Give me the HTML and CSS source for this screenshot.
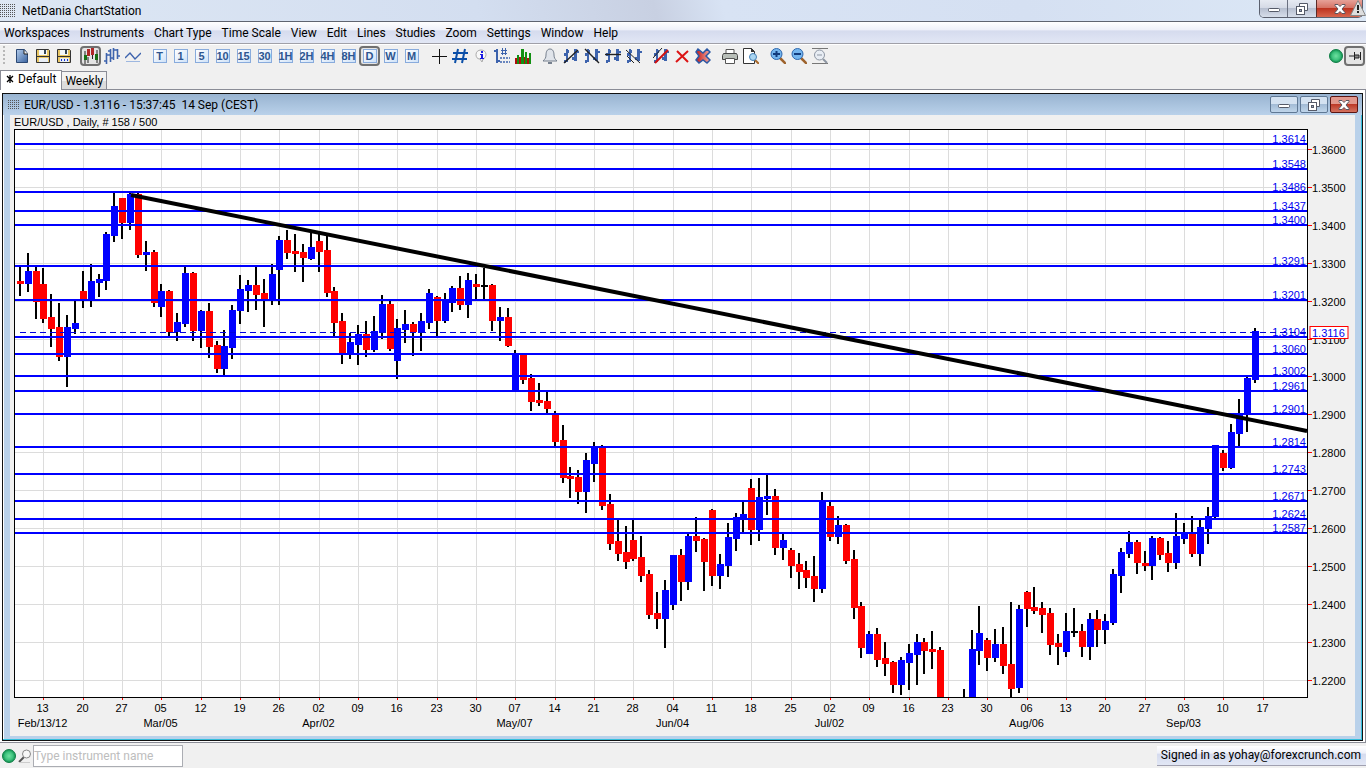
FILE: index.html
```
<!DOCTYPE html>
<html lang="en">
<head>
    <meta charset="UTF-8">
    <meta name="viewport" content="width=device-width, initial-scale=1.0">
    <title>NetDania ChartStation</title>
    <link rel="stylesheet" href="styles.css">
</head>
<body>
    <!-- shared icon shapes -->
    <svg class="defs" width="0" height="0">
        <defs>
            <radialGradient id="green"><stop offset="0" stop-color="#6fe0a0"/><stop offset="0.6" stop-color="#3fc37e"/><stop offset="1" stop-color="#0f9050"/></radialGradient>
            <linearGradient id="page" x2="1" y2="1"><stop offset="0" stop-color="#b4cdec"/><stop offset="1" stop-color="#3a639f"/></linearGradient>
            <linearGradient id="redx"><stop offset="0" stop-color="#c01818"/><stop offset="1" stop-color="#f4aaa0"/></linearGradient>
            <pattern id="dots" width="2" height="2" patternUnits="userSpaceOnUse"><rect width="1" height="1" fill="#555"/></pattern>
            <symbol id="bars" viewBox="0 0 16 16"><path d="M3 1h2v13H3zM1 5h2v3H1zM1 12h2v3H1zM5 2h1v3H5zM11 1h3v12h-3zM14 3h2v2h-2zM9 9h2v3H9z" fill="#3d63ad"/></symbol>
            <symbol id="ball" viewBox="0 0 16 16"><circle cx="8" cy="8" r="6.5" fill="url(#green)" stroke="#128048"/></symbol>
            <symbol id="disk" viewBox="0 0 16 16"><path d="M1.5 1.5h12l1 1v12h-13z" fill="#e9c765" stroke="#333"/><path d="M4 2h8v5H4z" fill="#f4f8fc"/><path d="M9 2h2v4H9z" fill="#345"/><path d="M2 8.500h12" stroke="#333"/><path d="M4 10h9v4H4z" fill="#e8eef6"/></symbol>
            <symbol id="min" viewBox="0 0 12 12"><rect x="0.5" y="5.5" width="11" height="3" rx="1" fill="#fff" stroke="#555a68"/></symbol>
            <symbol id="restore" viewBox="0 0 12 12"><path d="M3.5 .5h8v7h-3v-4h-5z" fill="#fff" stroke="#555a68"/><rect x="0.5" y="3.5" width="8" height="8" fill="#fff" stroke="#555a68"/><rect x="3.5" y="6.5" width="2" height="2" fill="#9aa7bd" stroke="#555a68"/></symbol>
            <symbol id="close" viewBox="0 0 12 12"><path d="M1 1.5h3l2 2 2-2h3v1L8 6l3 3.500v1H8l-2-2-2 2H1v-1L4 6 1 2.500z" fill="#fff" stroke="#5a5560"/></symbol>
        </defs>
    </svg>

    <header class="titlebar">
        <svg class="grip" viewBox="0 0 15 13"><rect width="15" height="13" fill="url(#dots)"/></svg>
        <h1>NetDania ChartStation</h1>
        <div class="window-btns">
            <button class="win-min" aria-label="Minimize"><svg><use href="#min"/></svg></button>
            <button class="win-restore" aria-label="Restore"><svg><use href="#restore"/></svg></button>
            <button class="win-close" aria-label="Close"><svg><use href="#close"/></svg></button>
            <svg class="warning" viewBox="0 0 16 16"><path d="M8 .5L15.500 15.500H.5z" fill="#dedede" stroke="#888"/><path d="M7 5h2v5H7zM7 11h2v2H7z" fill="#222"/></svg>
        </div>
    </header>

    <nav class="menubar">
        <button>Workspaces</button>
        <button>Instruments</button>
        <button>Chart Type</button>
        <button>Time Scale</button>
        <button>View</button>
        <button>Edit</button>
        <button>Lines</button>
        <button>Studies</button>
        <button>Zoom</button>
        <button>Settings</button>
        <button>Window</button>
        <button>Help</button>
    </nav>

    <div class="toolbar">
        <div class="handle"></div>
        <div class="group">
            <button aria-label="New"><svg viewBox="0 0 16 16"><path d="M2.500 1.500h8l3 4v9h-11z" fill="url(#page)" stroke="#2b4874"/><path d="M10 2v4h4" fill="#eee" stroke="#222"/></svg></button>
            <button aria-label="Save"><svg><use href="#disk"/></svg></button>
            <button aria-label="Save as"><svg viewBox="0 0 16 16"><use href="#disk" width="16" height="16"/><path d="M5 12h1M8 12h1M11 12h1" stroke="#1030d0" stroke-width="2"/></svg></button>
        </div>
        <div class="group">
            <button class="pressed" aria-label="Candles"><svg viewBox="0 0 16 16"><path d="M2 3v13M5 9v6M14 2v13" stroke="#222"/><path d="M1 7h3v5H1zM12 6h3v6h-3z" fill="#157015"/><path d="M4 1h3v7H4zM8 0h3v7H8z" fill="#b02828"/><path d="M9.500 7v4" stroke="#222"/></svg></button>
            <button aria-label="Bars"><svg viewBox="0 0 16 16" fill="none" stroke="#3d63ad"><path d="M2.500 5v11M0 13h2M3 7h3M6.500 1v13M4 3h3M7 10h3M9.500 0v12M9 2h5M13.500 1v10M13 8h3" stroke-width="1.600"/></svg></button>
            <button aria-label="Line"><svg viewBox="0 0 16 16" fill="none" stroke="#3d63ad"><path d="M0 10l5-5 5 6 6-6" stroke-width="1.400"/><path d="M1 13.500h14" stroke="#9db7e0"/></svg></button>
        </div>
        <div class="group scales">
            <button><span>T</span></button>
            <button><span>1</span></button>
            <button><span>5</span></button>
            <button><span>10</span></button>
            <button><span>15</span></button>
            <button><span>30</span></button>
            <button><span>1H</span></button>
            <button><span>2H</span></button>
            <button><span>4H</span></button>
            <button><span>8H</span></button>
            <button class="pressed"><span>D</span></button>
            <button><span>W</span></button>
            <button><span>M</span></button>
        </div>
        <div class="group">
            <button aria-label="Crosshair"><svg viewBox="0 0 16 16"><path d="M8.500 1v15M1 8.500h15" stroke="#111"/></svg></button>
            <button aria-label="Grid"><svg viewBox="0 0 16 16"><path d="M6 1L3 15M13 1l-3 14M1 5h15M0 11h15" stroke="#0b4fa8" stroke-width="2"/></svg></button>
            <button aria-label="Info"><svg viewBox="0 0 16 16"><path d="M8 2c3 0 5 2 5 4.500S11 11 10 11l-1 3-2-3C4 11 3 9 3 6.500S5 2 8 2z" fill="#f8f8f8" stroke="#aaa"/><path d="M8 3h2v2H8zM7 6h3v4h1v1H7v-1h1V7H7z" fill="#1818e0"/></svg></button>
            <button aria-label="Values"><svg viewBox="0 0 16 16" fill="none" stroke="#3d63ad"><path d="M3 1v14M0 3h3M3 13h3" stroke-width="2"/><path d="M7 2.500h6M7 5.500h6M8.500 0v7M11.500 0v7"/><path d="M6 10h10M6 14h10" stroke-dasharray="2 1" stroke-width="1.500"/></svg></button>
            <button aria-label="Volume"><svg viewBox="0 0 16 16"><path d="M0 10h2v6H0zM4 9h2v7H4zM9 9h3v7H9zM12 10h2v6h-2z" fill="#b00c0c"/><path d="M2 7h2v9H2zM6 1h3v15H6zM10 4h2v12h-2zM14 5h2v11h-2z" fill="#129012"/></svg></button>
        </div>
        <div class="group">
            <button aria-label="Alert"><svg viewBox="0 0 16 16"><path d="M8 1c3 0 4 3 4 6s1 4 3 6H1c2-2 3-3 3-6s1-6 4-6z" fill="#e0e4ea" stroke="#76808e"/><path d="M6 14h4v2H6z" fill="#76808e"/></svg></button>
            <button aria-label="Trend line"><svg viewBox="0 0 16 16"><use href="#bars" width="16" height="16"/><path d="M1 15L15 2" stroke="#222" stroke-width="1.400"/></svg></button>
            <button aria-label="Ray"><svg viewBox="0 0 16 16"><use href="#bars" width="16" height="16"/><path d="M1 1l14 14" stroke="#222" stroke-width="1.400"/></svg></button>
            <button aria-label="Horizontal line"><svg viewBox="0 0 16 16"><use href="#bars" width="16" height="16"/><path d="M0 6.500h16" stroke="#222" stroke-width="1.400"/></svg></button>
            <button aria-label="Channel"><svg viewBox="0 0 16 16"><use href="#bars" width="16" height="16"/><path d="M0 2l14 13M1 8l7 7" stroke="#222"/></svg></button>
        </div>
        <div class="group">
            <button aria-label="Delete line"><svg viewBox="0 0 16 16"><use href="#bars" width="16" height="16"/><path d="M0 10L9 0" stroke="#222"/><path d="M2 15L15 2" stroke="#d01010" stroke-width="2"/></svg></button>
            <button aria-label="Delete"><svg viewBox="0 0 16 16"><path d="M3 3l11 11M14 3L2 14" stroke="#dc1414" stroke-width="2"/></svg></button>
            <button aria-label="Delete all"><svg viewBox="0 0 16 16"><path d="M3 1l5 4 4-4 3 3-4 4 4 4-3 3-4-3-4 3-3-3 3-4-3-4z" fill="url(#redx)" stroke="#2b58a4" stroke-width="1.500"/></svg></button>
        </div>
        <div class="group">
            <button aria-label="Print"><svg viewBox="0 0 16 16"><path d="M4 1.500h8V6H4z" fill="#fff" stroke="#555"/><path d="M1.500 5.500h13l1 2v4H.5v-4z" fill="#b8beb8" stroke="#444"/><path d="M3.500 10.500h9v5h-9z" fill="#fff" stroke="#555"/></svg></button>
            <button aria-label="Preview"><svg viewBox="0 0 16 16"><path d="M.5 .5h8l3 3v12H.5z" fill="#fff" stroke="#333"/><path d="M8 0v4h4" fill="#333"/><path d="M12 12l4 4" stroke="#a8692c" stroke-width="2"/><circle cx="10" cy="9" r="3.500" fill="#a9d5f2" stroke="#4580b5"/></svg></button>
        </div>
        <div class="group">
            <button aria-label="Zoom in"><svg viewBox="0 0 16 16"><path d="M10 10l6 6" stroke="#9d622c" stroke-width="2.500"/><circle cx="6.500" cy="6" r="5.500" fill="#74b5ee" stroke="#2f68ae"/><path d="M3 6h7M6.500 3v6" stroke="#123b7c" stroke-width="2"/></svg></button>
            <button aria-label="Zoom out"><svg viewBox="0 0 16 16"><path d="M10 10l6 6" stroke="#9d622c" stroke-width="2.500"/><circle cx="6.500" cy="6" r="5.500" fill="#74b5ee" stroke="#2f68ae"/><path d="M3 6h7" stroke="#123b7c" stroke-width="2"/></svg></button>
            <button aria-label="Zoom reset"><svg viewBox="0 0 16 16" fill="none" stroke="#8d96a3"><path d="M0 .5h16M0 15.500h16" stroke="#777"/><path d="M11 11l4 4" stroke-width="2"/><circle cx="7.500" cy="7" r="5" fill="#e8edf4"/><path d="M5 7h5"/></svg></button>
        </div>
        <div class="group right">
            <svg class="ball"><use href="#ball"/></svg>
            <button class="pressed" aria-label="Pin"><svg viewBox="0 0 16 16"><path d="M2 8h5M7.500 4v8M8 7h4v3H8M13.500 4v8" fill="#888" stroke="#222"/></svg></button>
        </div>
    </div>

    <div class="tabs">
        <button class="tab active"><svg viewBox="0 0 8 8"><path d="M4 0v8M1 1l6 6M7 1L1 7" stroke="#000" stroke-width="1.300"/></svg>Default</button>
        <button class="tab">Weekly</button>
    </div>

    <main class="desktop">
        <section class="frame">
            <div class="frame-title">
                <svg class="grip" viewBox="0 0 12 9"><rect width="12" height="9" fill="url(#dots)"/></svg>
                <h2>EUR/USD - 1.3116 - 15:37:45 &nbsp;14 Sep (CEST)</h2>
                <div class="frame-btns">
                    <button aria-label="Minimize chart"><svg><use href="#min"/></svg></button>
                    <button aria-label="Restore chart"><svg><use href="#restore"/></svg></button>
                    <button class="red" aria-label="Close chart"><svg><use href="#close"/></svg></button>
                </div>
            </div>
            <div class="chart-panel">
                <p class="chart-info">EUR/USD , Daily, # 158 / 500</p>
                <div class="chart-box"><svg id="chart"></svg></div>
            </div>
        </section>
    </main>

    <footer class="statusbar">
        <svg class="ball"><use href="#ball"/></svg>
        <label for="instrument" aria-label="Instrument"><svg class="search" viewBox="0 0 14 14"><path d="M6 8L1 13" stroke="#555" stroke-width="2"/><circle cx="8.500" cy="5" r="4" fill="#f8f8f8" stroke="#888"/><path d="M1 13.500h11" stroke="#ccc"/></svg></label>
        <input id="instrument" type="text" placeholder="Type instrument name">
        <div class="signed">Signed in as yohay@forexcrunch.com</div>
    </footer>

    <script src="chart.js"></script>
</body>
</html>
```
FILE: styles.css
```
* {
    box-sizing: border-box;
    margin: 0;
    padding: 0;
}

body {
    display: flex;
    flex-direction: column;
    min-height: 100vh;
    background-color: #f0f0f0;
    font-family: Roboto, "Open Sans", sans-serif;
    font-size: 12px;
    line-height: 16px;
    color: #000;
}

button {
    font: inherit;
    color: inherit;
    border: none;
    background: none;
}

h1, h2 {
    font-size: 12px;
    font-weight: normal;
}

.defs {
    position: absolute;
}

/* main window title */
.titlebar {
    display: flex;
    align-items: center;
    height: 22px;
    border-bottom: 1px solid #5f6470;
    background: linear-gradient(75deg, #dde7f4 0%, #d3def0 35%, #c8d0e2 48%, #d8e3f4 53%, #d5e0f2 75%, #dce8f6 100%);
}

.titlebar .grip {
    width: 15px;
    height: 13px;
    margin-right: 7px;
}

.window-btns {
    position: relative;
    display: flex;
    align-self: flex-start;
    margin-left: auto;
    margin-right: 3px;
    height: 18px;
    border: 1px solid #5b606e;
    border-top: none;
    border-radius: 0 0 5px 5px;
}

.window-btns button {
    display: flex;
    align-items: center;
    justify-content: center;
    width: 28px;
    background: linear-gradient(#e6eaf2 0%, #d5dae6 45%, #b7bfd0 50%, #d7deea 100%);
}

.window-btns svg {
    width: 12px;
    height: 12px;
}

.window-btns .win-min {
    border-right: 1px solid #6a7080;
    border-radius: 0 0 0 4px;
}

.window-btns .win-close {
    width: 46px;
    border-left: 1px solid #5c2a26;
    border-radius: 0 0 4px 0;
    background: linear-gradient(#e6a198 0%, #d67365 45%, #bd3320 50%, #d8664e 100%);
}

.window-btns .warning {
    position: absolute;
    right: -4px;
    top: 0;
    width: 16px;
    height: 16px;
}

/* menu */
.menubar {
    display: flex;
    gap: 10px;
    height: 22px;
    padding: 0 4px;
    border-bottom: 1px solid #a0a0a8;
    background: linear-gradient(#fff 0%, #eef0f9 38%, #d5dbee 42%, #e2e7f5 100%);
}

/* toolbar */
.toolbar {
    display: flex;
    align-items: center;
    gap: 6px;
    height: 26px;
    padding-bottom: 3px;
    border-top: 1px solid #fff;
}

.toolbar .handle {
    width: 2px;
    height: 20px;
    margin-left: 3px;
    background: repeating-linear-gradient(#b8b8b8 0 2px, #f0f0f0 2px 4px);
}

.group {
    display: flex;
    align-items: center;
}

.group button {
    display: flex;
    align-items: center;
    justify-content: center;
    width: 21px;
    height: 20px;
}

.group svg {
    width: 16px;
    height: 16px;
    flex-shrink: 0;
}

.group .pressed {
    border: 2px solid #707070;
    border-radius: 4px;
    background-color: #e4e4e4;
}

.scales span {
    width: 14px;
    height: 14px;
    border: 1px solid #88abdc;
    background: linear-gradient(135deg, #fff, #cfe2f8);
    font-family: "Liberation Sans", sans-serif;
    font-size: 11px;
    font-weight: bold;
    line-height: 13px;
    color: #2d5590;
    display: flex;
    justify-content: center;
    flex-shrink: 0;
}

.group.right {
    margin-left: auto;
    margin-right: 1px;
}

.ball {
    width: 16px;
    height: 16px;
    flex-shrink: 0;
}

/* workspace tabs */
.tabs {
    display: flex;
    align-items: flex-end;
    height: 20px;
    border-bottom: 1px solid #8a8c96;
}

.tab {
    height: 18px;
    padding: 0 3px;
    border: 1px solid #8a8c96;
    border-left: none;
    border-bottom: none;
    background: linear-gradient(#f2f2f2 50%, #dcdcdc 50%);
    line-height: 18px;
}

.tab.active {
    height: 20px;
    margin-bottom: -1px;
    border-left: 1px solid #8a8c96;
    padding: 0 5px 3px;
    background: #fff;
    line-height: 16px;
}

.tab svg {
    width: 8px;
    height: 8px;
    margin-right: 4px;
}

/* chart window */
.desktop {
    flex: 1;
    display: flex;
    padding: 3px 2px 1px;
    background-color: #fff;
    border-bottom: 1px solid #8a8c96;
    border-right: 1px solid #8a8c96;
}

.frame {
    flex: 1;
    display: flex;
    flex-direction: column;
    border: 1px solid #111;
    background-color: #b9d1ea;
    box-shadow: inset -1px -1px #35bfdc, inset 1px 0 #fff;
}

.frame-title {
    display: flex;
    align-items: center;
    height: 21px;
    padding: 0 4px 0 5px;
    background: linear-gradient(#99b4d1, #b9d1ea);
}

.frame-title .grip {
    width: 12px;
    height: 9px;
    margin-right: 4px;
}

.frame-btns {
    display: flex;
    gap: 2px;
    margin-left: auto;
}

.frame-btns button {
    display: flex;
    align-items: center;
    justify-content: center;
    width: 28px;
    height: 17px;
    border: 1px solid #5f7894;
    border-radius: 2px;
    background: linear-gradient(#d4e2f1 45%, #a3bcd6 50%, #bfd5ea);
}

.frame-btns .red {
    border-color: #5c1512;
    background: linear-gradient(#e2988d 45%, #bd3a28 50%, #d4725f);
}

.frame-btns svg {
    width: 12px;
    height: 12px;
}

.chart-panel {
    flex: 1;
    display: flex;
    flex-direction: column;
    margin: 0 7px 4px;
    background-color: #f0f0f0;
    font-family: "Liberation Sans", sans-serif;
    font-size: 11px;
}

.chart-info {
    height: 13px;
    padding-left: 4px;
    line-height: 14px;
}

.chart-box {
    flex: 1;
    display: flex;
    min-height: 300px;
}

#chart {
    flex: 1;
    width: 100%;
    min-width: 0;
}

#chart .plot { fill: #fff; }
#chart .border { fill: none; stroke: #000; }
#chart .grid { stroke: #dcdcdc; }
#chart .tick { stroke: #f00; }
#chart .level { fill: #00f; }
#chart .label { fill: #0000f0; }
#chart .up { fill: #00f; }
#chart .down { fill: #f00; }
#chart .doji, #chart .wick { fill: #000; }
#chart .trend { stroke: #000; stroke-width: 4; }
#chart .last { stroke: #0000e0; stroke-dasharray: 6 4; }
#chart .price-tag { fill: #fff; stroke: #f00; }

/* status bar */
.statusbar {
    display: flex;
    align-items: center;
    height: 25px;
    padding-left: 1px;
}

.statusbar label {
    display: flex;
    width: 16px;
    padding-left: 1px;
}

.search {
    width: 14px;
    height: 14px;
}

.statusbar input {
    width: 150px;
    height: 22px;
    border: 1px solid #abadb3;
    background-color: #fff;
    font: inherit;
    font-size: 12px;
}

.statusbar input::placeholder {
    color: #bdbdbd;
}

.signed {
    margin-left: auto;
    height: 20px;
    padding: 1px 5px 0 4px;
    border-bottom: 1px solid #a0a0b0;
    background: linear-gradient(#fff 0%, #eef0f9 38%, #d5dbee 42%, #e2e7f5 100%);
}
```
FILE: chart.js
```
const SVG = 'http://www.w3.org/2000/svg';
const svg = document.getElementById('chart');

// value range of the candle data, top and bottom of the plot
const TOP = 129, BOTTOM = 697;

const levels = ['1.3614', '1.3548', '1.3486', '1.3437', '1.3400', '1.3291', '1.3201', '1.3104', '1.3060',
    '1.3002', '1.2961', '1.2901', '1.2814', '1.2743', '1.2671', '1.2624', '1.2587'];
const weeks = ['13', '20', '27', '05', '12', '19', '26', '02', '09', '16', '23', '30', '07', '14', '21', '28',
    '04', '11', '18', '25', '02', '09', '16', '23', '30', '06', '13', '20', '27', '03', '10', '17'];
const months = { 0: 'Feb/13/12', 3: 'Mar/05', 7: 'Apr/02', 12: 'May/07', 16: 'Jun/04', 20: 'Jul/02', 25: 'Aug/06', 29: 'Sep/03' };

// direction, high, body top, body bottom, low
const candles = `r 267 281 284 296|b 253 271 284 292|r 267 271 302 319|r 268 284 319 323|r 294 317 329 347
r 303 327 357 361|b 315 327 357 387|b 300 323 329 334|r 271 291 300 308|b 264 281 300 307
b 274 279 283 297|b 232 234 281 290|b 193 206 236 242|r 198 198 223 239|b 193 194 223 230
r 193 194 255 258|b 241 252 255 271|r 250 252 303 307|b 284 291 307 317|r 290 291 332 336
b 313 322 332 341|b 267 273 324 327|r 272 273 331 341|b 310 311 331 348|r 303 311 347 358
r 341 345 369 373|b 330 346 369 375|b 305 310 348 359|b 275 289 311 324|b 280 285 291 312
r 267 285 295 310|r 279 293 300 327|b 264 274 300 305|b 236 240 270 305|r 230 240 253 259
r 234 251 254 272|r 244 252 258 282|b 233 247 259 260|r 234 241 252 272|r 236 250 293 297
r 287 291 323 336|r 313 321 354 364|b 333 342 354 359|b 325 334 345 365|r 321 334 350 357
b 316 331 350 352|b 295 304 333 339|r 301 304 349 351|b 319 328 361 379|b 310 324 330 343
r 322 324 332 356|b 313 321 333 351|b 289 293 323 329|r 296 297 321 336|b 293 300 321 323
b 286 288 303 312|r 276 288 305 310|b 273 280 305 318|r 274 284 287 299|k 268 285 287 299
r 284 285 321 331|b 307 317 321 341|r 308 317 346 347|b 350 354 391 391|r 354 354 380 384
r 374 378 402 411|r 383 400 403 406|r 392 401 409 414|r 411 414 442 447|r 425 440 478 483
r 467 476 479 498|r 470 477 492 504|b 453 460 492 513|b 442 447 464 482|r 445 447 506 510
r 494 504 544 550|r 519 541 554 561|r 526 552 562 569|r 519 540 559 561|r 536 557 576 582
r 570 574 615 619|r 592 613 619 629|b 580 590 619 648|b 555 555 605 610|r 549 555 582 601
b 533 536 582 590|r 517 536 541 552|r 538 539 562 591|r 509 510 576 586|b 554 564 576 589
b 523 537 566 577|b 513 517 539 551|b 501 514 519 533|r 479 488 530 545|b 478 497 530 541
b 474 496 499 515|r 489 496 548 555|b 533 540 548 560|r 548 550 566 578|r 553 564 572 589
r 561 570 578 588|r 556 576 589 602|b 492 501 589 593|r 501 506 537 541|b 516 525 537 544
r 524 525 561 564|r 550 559 608 619|r 602 606 648 658|b 631 634 654 654|r 628 634 660 667
r 642 658 664 676|r 661 662 685 693|b 657 660 685 695|b 644 653 663 690|b 634 642 655 685
r 638 642 651 674|r 631 649 652 669|r 647 650 697 697|r 697 697 697 697|r 697 697 697 697
b 689 697 697 697|b 630 649 697 697|b 606 633 651 665|r 638 640 658 671|b 629 644 658 662
r 627 644 666 674|r 602 664 689 697|b 605 609 688 693|r 591 592 609 627|r 587 607 611 614
r 602 608 615 633|r 608 613 645 655|r 634 643 647 665|b 613 631 652 657|k 608 631 633 637
r 624 631 647 657|b 613 619 647 660|r 610 619 630 647|b 614 621 630 644|b 569 574 623 625
b 548 552 576 593|b 531 542 554 558|r 540 542 563 574|r 551 563 566 571|b 536 538 566 580
r 537 538 555 560|r 541 553 563 572|b 513 536 563 569|b 523 533 539 544|r 516 533 554 557
b 520 527 554 566|b 507 516 529 544|b 445 445 517 518|r 450 453 468 471|b 424 432 468 469
b 399 414 434 446|b 377 378 414 432|b 328 331 380 383`.split(/[|\n]/).map(row => row.split(' '));

function add(name, attrs, text) {
    const el = document.createElementNS(SVG, name);
    for (const key in attrs) el.setAttribute(key, attrs[key]);
    if (text) el.textContent = text;
    svg.appendChild(el);
}

function line(cls, x1, y1, x2, y2) {
    add('line', { class: cls, x1, y1, x2, y2 });
}

function rect(cls, x, y, width, height) {
    add('rect', { class: cls, x, y, width, height });
}

function draw() {
    svg.replaceChildren();
    const box = svg.parentNode.getBoundingClientRect();
    const left = 4, top = 1;
    const right = Math.floor(box.width) - 48, bottom = Math.floor(box.height) - 39;

    const step = (right - left) / 164.4;
    const x = i => Math.round(left + step * (i + 0.75));
    const y = v => Math.round(top + (v - TOP) * (bottom - top) / (BOTTOM - TOP));
    const price = p => y(Math.floor(149.5 + (1.36 - p) * 3790));

    rect('plot', left, top, right - left, bottom - top);

    weeks.forEach((day, i) => {
        const wx = x(3 + i * 5) + 0.5;
        line('grid', wx, top, wx, bottom);
        line('tick', wx, bottom + 1, wx, bottom + 3);
        add('text', { x: wx - 1, y: bottom + 15, 'text-anchor': 'middle' }, day);
        if (months[i]) add('text', { x: wx - 1, y: bottom + 30, 'text-anchor': 'middle' }, months[i]);
    });
    for (let p = 136; p >= 122; p--) {
        const py = price(p / 100) + 0.5;
        line('grid', left, py, right, py);
        line('tick', right + 1, py, right + 5, py);
        add('text', { x: right + 5, y: py + 4 }, (p / 100).toFixed(4));
    }

    candles.forEach(([dir, high, open, close, low], i) => {
        const cx = x(i);
        rect('wick', cx - 1, y(high), 2, y(low) - y(high));
        rect({ r: 'down', b: 'up', k: 'doji' }[dir], cx - 3, y(open), 7, y(close) - y(open));
    });

    levels.forEach(p => {
        rect('level', left, price(p) - 1, right - left, 2);
        add('text', { class: 'label', x: right - 1, y: price(p) - 1, 'text-anchor': 'end' }, p);
    });

    const last = y(332) + 0.5;
    line('last', x(0), last, right, last);
    line('trend', x(14) + 1, y(195), right, y(431));
    add('rect', { class: 'border', x: left + 0.5, y: top + 0.5, width: right - left, height: bottom - top });
    rect('price-tag', right + 3, last - 6, 38, 12);
    add('text', { class: 'label', x: right + 5, y: last + 4 }, '1.3116');
}

draw();
window.addEventListener('resize', draw);
```
